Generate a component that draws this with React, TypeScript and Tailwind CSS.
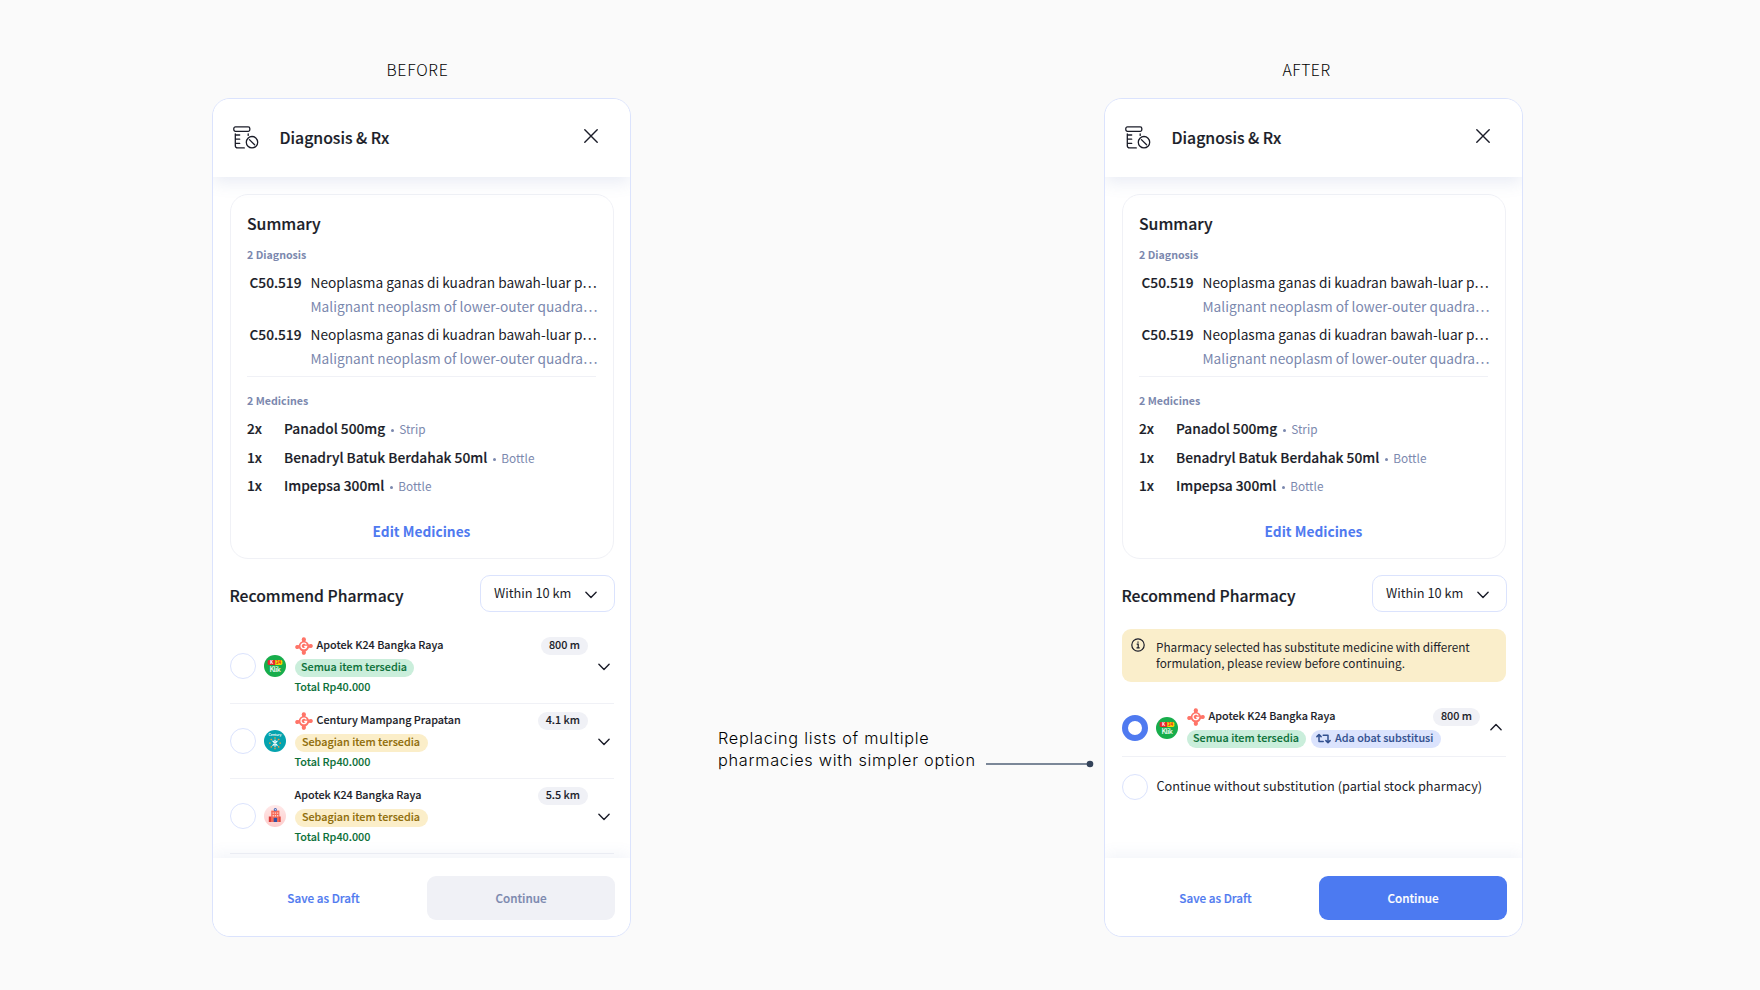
import { ReactNode } from "react";

const diagnoses = [
  { code: "C50.519", name: "Neoplasma ganas di kuadran bawah-luar p…", sub: "Malignant neoplasm of lower-outer quadra…" },
  { code: "C50.519", name: "Neoplasma ganas di kuadran bawah-luar p…", sub: "Malignant neoplasm of lower-outer quadra…" },
];

const medicines = [
  { qty: "2x", name: "Panadol 500mg", unit: "Strip" },
  { qty: "1x", name: "Benadryl Batuk Berdahak 50ml", unit: "Bottle" },
  { qty: "1x", name: "Impepsa 300ml", unit: "Bottle" },
];

const pharmacies = [
  { name: "Apotek K24 Bangka Raya", partner: true, full: true, distance: "800 m", logo: <K24Logo /> },
  { name: "Century Mampang Prapatan", partner: true, full: false, distance: "4.1 km", logo: <CenturyLogo /> },
  { name: "Apotek K24 Bangka Raya", partner: false, full: false, distance: "5.5 km", logo: <ClinicLogo /> },
];

// semibold sits between the installed medium and bold weights
const semi = "font-medium [-webkit-text-stroke:0.18px]";
const small = "text-[10.8px] leading-[15px] font-medium [-webkit-text-stroke:0.1px]";

function RxIcon() {
  return (
    <svg width="26" height="24" viewBox="0 0 26 24" fill="none" stroke="#1b1d29" strokeWidth="1.3" strokeLinecap="round" strokeLinejoin="round">
      <rect x="0.8" y="0.9" width="16" height="4.4" rx="1.6" />
      <path d="M2.3 7.8v11.6c0 1.6.9 2.5 2.4 2.5h6.6M15.2 7.8v1.6M2.3 9h4.4M2.3 13.2h4.4M2.3 17.4h4.4" />
      <circle cx="19" cy="16.2" r="5.7" />
      <path d="M16.4 13.6l5.2 5.2" />
    </svg>
  );
}

function Chevron({ up = false }: { up?: boolean }) {
  return (
    <svg className={up ? "rotate-180" : ""} width="12" height="8" viewBox="0 0 12 8" fill="none" stroke="#1b1d29" strokeWidth="1.4" strokeLinecap="round" strokeLinejoin="round">
      <path d="M0.9 1.3L6 6.5l5.1-5.2" />
    </svg>
  );
}

function PartnerIcon() {
  return (
    <svg width="18" height="18" viewBox="0 0 18 18" className="shrink-0">
      <g stroke="#ff7468" strokeWidth="3.2" strokeLinecap="round">
        <path d="M8.8 2.3L8.600 6" />
        <path d="M8.800 15.900V12" />
        <path d="M2.100 10.100L5 9.500" />
        <path d="M15.900 9L13 9.300" />
      </g>
      <g fill="#ff7468">
        <circle cx="8.900" cy="9.300" r="5.200" />
        <circle cx="8.800" cy="2.400" r="2.100" />
        <circle cx="8.800" cy="15.700" r="2.100" />
        <circle cx="2.200" cy="10" r="1.900" />
        <circle cx="15.800" cy="9" r="1.900" />
      </g>
      <path d="M11.300 7.500A2.800 2.800 0 1 0 11.600 9.500H9.200" fill="none" stroke="#fff" strokeWidth="1.300" />
    </svg>
  );
}

function K24Logo() {
  return (
    <svg width="22" height="22" viewBox="0 0 22 22" className="shrink-0">
      <circle cx="11" cy="11" r="11" fill="#17ad4b" />
      <path d="M5.3 5h6v5h-6a1.6 1.6 0 0 1-1.5-2.5A1.6 1.6 0 0 1 5.3 5z" fill="#e8252b" />
      <path d="M11.3 5h5.4a1.7 1.7 0 0 1 1.6 2.5 1.7 1.7 0 0 1-1.6 2.5h-5.4z" fill="#fbd400" />
      <text x="5.9" y="9.2" fontSize="4.6" fontWeight="700" fill="#fff">K</text>
      <text x="12" y="9.2" fontSize="4.4" fontWeight="700" fill="#e8252b">24</text>
      <text x="5.4" y="17.4" fontSize="7" fontWeight="500" fill="#fff" textLength="11.4">Klik</text>
    </svg>
  );
}

function CenturyLogo() {
  return (
    <svg width="22" height="22" viewBox="0 0 22 22" className="shrink-0">
      <circle cx="11" cy="11" r="11" fill="#05a3ae" />
      <text x="4.6" y="5.6" fontSize="3.6" fontWeight="500" fill="#fff" textLength="12.8">Century</text>
      {[0, 45, 90, 135, 180, 225, 270, 315].map(a => (
        <path key={a} d="M11 8.8V7.2" stroke="#f59a3c" strokeWidth="1.3" transform={`rotate(${a} 11 13.2)`} />
      ))}
      {[0, 45, 135, 180, 225, 315].map(a => (
        <path key={a} d="M11 12.2V10.2" stroke="#fff" strokeWidth="1.2" strokeLinecap="round" transform={`rotate(${a} 11 13.2)`} />
      ))}
    </svg>
  );
}

function ClinicLogo() {
  return (
    <svg width="22" height="22" viewBox="0 0 22 22" className="shrink-0">
      <defs>
        <linearGradient id="clinic" x1="0" y1="0" x2="0" y2="1">
          <stop offset="0" stopColor="#ffe9e9" />
          <stop offset="1" stopColor="#fdcccb" />
        </linearGradient>
      </defs>
      <circle cx="11" cy="11" r="11" fill="url(#clinic)" />
      <path d="M4.8 11.5h3V17h-3z" fill="#d93a3a" />
      <path d="M7.2 5.6h8.2V17H7.2z" fill="#f76b58" />
      <path d="M14.8 11.500h1.900V17h-1.900z" fill="#e14b43" />
      <path d="M8.600 7.400h1.300v1.300H8.600zM10.800 7.400h1.300v1.300h-1.300zM13 7.400h1.300v1.300H13zM8.600 10.100h1.300v1.300H8.600zM10.800 10.100h1.300v1.300h-1.300zM13 10.100h1.300v1.300H13z" fill="#ffd3cb" />
      <path d="M9.700 12.800h3.400V17H9.700z" fill="#3451a4" />
      <circle cx="11.3" cy="4.7" r="1.6" fill="#4a68b8" />
      <circle cx="11.3" cy="4.7" r="0.6" fill="#fff" />
    </svg>
  );
}

function Radio({ checked = false }: { checked?: boolean }) {
  return (
    <span className={`size-[26px] shrink-0 rounded-full bg-white ${checked ? "border-[6.7px] border-[#4f7af0]" : "border border-[#dbe3fd]"}`} />
  );
}

function StockBadge({ full }: { full: boolean }) {
  return full ? (
    <span className={`flex h-[18px] w-[119px] justify-center rounded-full bg-[#caeedb] text-[#0b7038] ${small}`}>Semua item tersedia</span>
  ) : (
    <span className={`flex h-[18px] w-[133px] justify-center rounded-full bg-[#fbeec9] text-[#8f6c08] ${small}`}>Sebagian item tersedia</span>
  );
}

function Distance({ children }: { children: ReactNode }) {
  return <span className={`ml-auto h-[18px] rounded-full bg-[#f0f1f6] px-[7.5px] ${small}`}>{children}</span>;
}

function Panel({ children, primary = false }: { children: ReactNode; primary?: boolean }) {
  return (
    <div className="mt-[18px] flex h-[839px] w-[419px] flex-col overflow-hidden rounded-[18px] border border-[#dbe3fd] bg-white">
      <header className="relative z-10 flex h-[78px] shrink-0 items-start bg-white pl-5 shadow-[0_5px_16px_rgba(90,110,180,0.14)]">
        <span className="mt-[27px]"><RxIcon /></span>
        <h1 className={`mt-[29px] ml-[20.5px] text-[15.8px] leading-5 ${semi}`}>Diagnosis &amp; Rx</h1>
        <svg className="mt-[30px] mr-[32px] ml-auto" width="14" height="14" viewBox="0 0 14 14" stroke="#1b1d29" strokeWidth="1.4" strokeLinecap="round">
          <path d="M0.8 0.8l12.4 12.4M13.2 0.8L0.8 13.2" />
        </svg>
      </header>

      <main className="min-h-0 flex-1 px-[16.5px] pt-[17px]">
        <section className="h-[365px] rounded-[18px] border border-[#f0f1f6] px-[16.5px] pt-[18.5px]">
          <h2 className={`text-[15.8px] leading-5 ${semi}`}>Summary</h2>
          <p className="mt-[11px] text-[10.65px] leading-5 font-bold text-[#7b88ae]">2 Diagnosis</p>
          <div className="mt-[5.5px] space-y-1">
            {diagnoses.map((d, i) => (
              <div key={i} className="flex text-[13.7px] leading-6 whitespace-nowrap">
                <span className={`w-[63.5px] shrink-0 pl-[2.5px] ${semi}`}>{d.code}</span>
                <div>
                  <p>{d.name}</p>
                  <p className="text-[#7b88ae]">{d.sub}</p>
                </div>
              </div>
            ))}
          </div>
          <div className="mt-[6px] h-px bg-[#f0f1f6]" />
          <p className="mt-[13.5px] text-[10.65px] leading-5 font-bold text-[#7b88ae]">2 Medicines</p>
          <ul className="mt-[7.5px]">
            {medicines.map(m => (
              <li key={m.name} className="flex h-[28.7px] items-baseline text-[13.72px] leading-5">
                <span className={`w-[37px] ${semi}`}>{m.qty}</span>
                <span className={semi}>{m.name}</span>
                <span className="mr-[5px] mb-[3.5px] ml-[6px] inline-block size-[3px] self-center rounded-full bg-[#7b88ae]" />
                <span className="text-[11.8px] text-[#7b88ae]">{m.unit}</span>
              </li>
            ))}
          </ul>
          <button className="mt-[17px] block w-full text-center text-[13.72px] leading-5 font-bold text-[#4f7af0]">Edit Medicines</button>
        </section>

        <div className="mt-4 flex items-center justify-between">
          <h2 className={`mt-[5px] text-[15.7px] leading-5 ${semi}`}>Recommend Pharmacy</h2>
          <div className="-mr-[1.5px] flex h-[37px] w-[135px] items-center rounded-[10px] border border-[#dbe3fd] pl-[13px] text-[12.75px] leading-5">
            <span className="-mt-[2px]">Within 10 km</span>
            <span className="mt-[3px] mr-[17px] ml-auto"><Chevron /></span>
          </div>
        </div>
        {children}
      </main>

      <footer className="relative z-10 flex h-[78px] shrink-0 items-center bg-white pt-[2px] pr-[15px] pl-4 text-[11.7px] shadow-[0_-4px_14px_rgba(90,110,180,0.08)]">
        <button className={`w-[189px] text-center text-[#4f7af0] ${semi}`}>Save as Draft</button>
        <button className={`ml-auto h-11 w-[188px] rounded-[9px] ${semi} ${primary ? "bg-[#4c7af1] text-white" : "bg-[#f0f1f6] text-[#7b88ae]"}`}>Continue</button>
      </footer>
    </div>
  );
}

function PharmacyList() {
  return (
    <div className="mt-[17px]">
      {pharmacies.map((p, i) => (
        <div key={i} className="flex h-[75px] items-center border-b border-[#f0f1f6]">
          <Radio />
          <span className="ml-[8.500px]">{p.logo}</span>
          <div className="ml-[8.500px] flex w-[293px] flex-col items-start self-start pt-2">
            <div className="flex h-[18px] w-full items-start">
              {p.partner && <span className="mr-1"><PartnerIcon /></span>}
              <span className={small}>{p.name}</span>
              <Distance>{p.distance}</Distance>
            </div>
            <span className="mt-1"><StockBadge full={p.full} /></span>
            <span className={`mt-[2px] text-[#0b7038] ${small}`}>Total Rp40.000</span>
          </div>
          <span className="mt-[2px] mr-[3.5px] ml-auto"><Chevron /></span>
        </div>
      ))}
    </div>
  );
}

function SimpleOption() {
  return (
    <>
      <div className="mt-[17px] flex h-[53px] items-start rounded-[9px] bg-[#faeecb] pl-[9.5px]">
        <svg className="mt-[9px]" width="14" height="14" viewBox="0 0 14 14" fill="none" stroke="#1b1d29" strokeWidth="1.2">
          <circle cx="7" cy="7" r="6.2" />
          <path d="M5.7 6.2h1.5v3.6M5.5 9.9h3.2M7 3.4v1.4" />
        </svg>
        <p className="mt-[10px] ml-[11px] text-[11.78px] leading-4 whitespace-nowrap">
          Pharmacy selected has substitute medicine with different<br />
          formulation, please review before continuing.
        </p>
      </div>
      <div className="mt-[18px] flex h-[57px] items-center border-b border-[#f0f1f6]">
        <Radio checked />
        <span className="ml-[8.500px]"><K24Logo /></span>
        <div className="ml-[8.500px] w-[293px]">
          <div className="flex h-[18px] items-start">
            <PartnerIcon />
            <span className={`ml-1 ${small}`}>Apotek K24 Bangka Raya</span>
            <Distance>800 m</Distance>
          </div>
          <div className="mt-1 flex gap-[5px]">
            <StockBadge full />
            <span className={`flex h-[18px] w-[130px] rounded-full bg-[#dbe3fd] pl-[5px] text-[#32508f] ${small}`}>
              <svg className="mt-[3px]" width="15" height="12" viewBox="0 0 15 12" fill="none" stroke="#32508f" strokeWidth="1.5" strokeLinecap="round" strokeLinejoin="round">
                <path d="M0.9 3.6L3 1.5 5.1 3.6M3 2v6.5h4.2M7.200 2.200H12v6.800M9.900 7.600L12 9.700l2.100-2.100" />
              </svg>
              <span className="ml-[4.5px]">Ada obat substitusi</span>
            </span>
          </div>
        </div>
        <span className="mr-[3.5px] mb-[2px] ml-auto"><Chevron up /></span>
      </div>
      <div className="mt-[17px] flex items-center">
        <Radio />
        <span className="-mt-[3px] ml-[9px] text-[12.72px] leading-5 whitespace-nowrap">Continue without substitution (partial stock pharmacy)</span>
      </div>
    </>
  );
}

export default function App() {
  return (
    <div className="flex h-[990px] w-[1760px] items-start overflow-hidden bg-[#fafafa] pl-[212px] font-['Noto_Sans_CJK_SC',sans-serif] text-[#1b1d29]">
      <div className="flex flex-col pt-[60px]">
        <p className="w-[411px] text-center text-[15.8px] leading-5 font-light tracking-[0.75px] text-black">BEFORE</p>
        <Panel><PharmacyList /></Panel>
      </div>
      <div className="mt-[727px] ml-[87px] flex w-[386px] items-start">
        <p className="font-['Inter',sans-serif] text-[16.3px] leading-[22px] font-light tracking-[0.72px] whitespace-nowrap text-black">
          Replacing lists of multiple<br />pharmacies with simpler option
        </p>
        <svg className="mt-[33px] mr-[10px] ml-auto" width="108" height="8" viewBox="0 0 108 8">
          <path d="M0 4h104" stroke="#7b8798" strokeWidth="2" />
          <circle cx="104" cy="4" r="3.3" fill="#34435a" />
        </svg>
      </div>
      <div className="flex flex-col pt-[60px]">
        <p className="w-[405px] text-center text-[15.8px] leading-5 font-light tracking-[0.5px] text-black">AFTER</p>
        <Panel primary><SimpleOption /></Panel>
      </div>
    </div>
  );
}
